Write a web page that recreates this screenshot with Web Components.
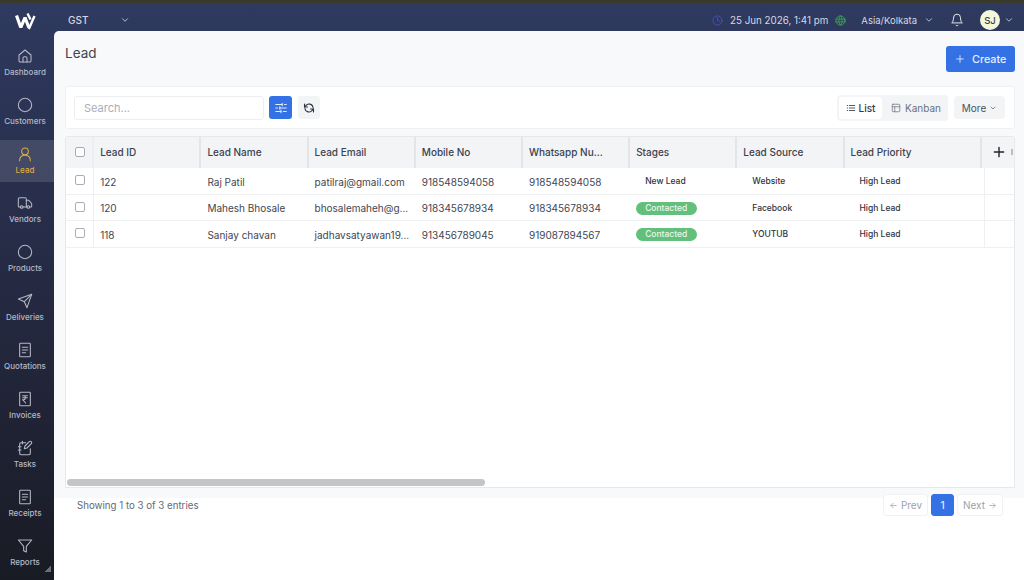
<!DOCTYPE html>
<html>
<head>
<meta charset="utf-8">
<title>Lead</title>
<style>
  html, body { margin: 0; height: 100%; }
  body { font-family: Inter, "Noto Sans", sans-serif; overflow: hidden; background: #fff; }
</style>
</head>
<body>
<app-shell>
  <side-nav slot="nav">
    <nav-item icon="home" label="Dashboard"></nav-item>
    <nav-item icon="circle" label="Customers"></nav-item>
    <nav-item icon="user" label="Lead" active></nav-item>
    <nav-item icon="truck" label="Vendors"></nav-item>
    <nav-item icon="circle" label="Products"></nav-item>
    <nav-item icon="send" label="Deliveries"></nav-item>
    <nav-item icon="file" label="Quotations"></nav-item>
    <nav-item icon="rupee" label="Invoices"></nav-item>
    <nav-item icon="notebook" label="Tasks"></nav-item>
    <nav-item icon="file" label="Receipts"></nav-item>
    <nav-item icon="funnel" label="Reports"></nav-item>
  </side-nav>
  <top-bar slot="top"></top-bar>
  <page-head title-text="Lead"></page-head>
  <lead-toolbar></lead-toolbar>
  <lead-table>
    <lead-row values="122|Raj Patil|patilraj@gmail.com|918548594058|918548594058" stage="New Lead" source="Website" priority="High Lead"></lead-row>
    <lead-row values="120|Mahesh Bhosale|bhosalemaheh@g...|918345678934|918345678934" stage="Contacted" source="Facebook" priority="High Lead"></lead-row>
    <lead-row values="118|Sanjay chavan|jadhavsatyawan19...|913456789045|919087894567" stage="Contacted" source="YOUTUB" priority="High Lead"></lead-row>
  </lead-table>
  <table-footer></table-footer>
</app-shell>

<script>
// stroke icons, all on a 24 box
const ICONS = {
  home: '<path d="M3 10.5 12 3l9 7.5V19a2 2 0 0 1-2 2H5a2 2 0 0 1-2-2z"/><path d="M9 21v-6a2 2 0 0 1 2-2h2a2 2 0 0 1 2 2v6"/>',
  circle: '<circle cx="12" cy="12" r="10"/>',
  user: '<circle cx="12" cy="8" r="5"/><path d="M4 22c0-5 3.5-8 8-8s8 3 8 8"/>',
  truck: '<path d="M14 18V6a2 2 0 0 0-2-2H4a2 2 0 0 0-2 2v11a1 1 0 0 0 1 1h2"/><path d="M15 18H9"/><path d="M19 18h2a1 1 0 0 0 1-1v-3.6a1 1 0 0 0-.2-.6l-3.5-4.4a1 1 0 0 0-.8-.4H14"/><circle cx="17" cy="18" r="2"/><circle cx="7" cy="18" r="2"/>',
  send: '<path d="M22 2 15 22l-4-9-9-4z"/><path d="M22 2 11 13"/>',
  file: '<rect x="4" y="2" width="16" height="20" rx="1"/><path d="M8 8h8M8 12h8M8 16h5"/>',
  rupee: '<rect x="4" y="2" width="16" height="20" rx="1"/><path d="M8.5 7h7M8.5 10h7M8.5 13l4.5 5M8.5 13h1.5c3.5 0 3.5-6 0-6"/>',
  notebook: '<path d="M13 4H6a2 2 0 0 0-2 2v14a2 2 0 0 0 2 2h12a2 2 0 0 0 2-2v-7"/><path d="M2 10h4M2 15h4M8 2v4"/><path d="M18.4 2.6a2 2 0 0 1 3 3L15 12l-4 1 1-4z"/>',
  funnel: '<path d="M22 3H2l8 9.5V19l4 2v-8.500z"/>',
  chevron: '<path d="m6 9 6 6 6-6"/>',
  clock: '<circle cx="12" cy="12" r="10"/><path d="M12 6v6l4 2"/>',
  globe: '<circle cx="12" cy="12" r="10"/><path d="M2 9h20M2 15h20"/><path d="M12 2c-5 5-5 15 0 20M12 2c5 5 5 15 0 20"/>',
  bell: '<path d="M6 8a6 6 0 0 1 12 0c0 7 3 9 3 9H3s3-2 3-9"/><path d="M10.300 21a1.900 1.900 0 0 0 3.400 0"/>',
  plus: '<path d="M12 4v16M4 12h16"/>',
  sliders: '<path d="M3 6h11M18 6h3M3 12h3M10 12h11M3 18h9M16 18h5"/><path d="M14 4v4M10 10v4M12 16v4"/>',
  refresh: '<path d="M20 11a8 8 0 0 0-14.500-3.500L3 10"/><path d="M3 4v6h6"/><path d="M4 13a8 8 0 0 0 14.500 3.500L21 14"/><path d="M21 20v-6h-6"/>',
  list: '<path d="M8 6h13M8 12h13M8 18h13M3 6h1M3 12h1M3 18h1"/>',
  kanban: '<rect x="3" y="3" width="18" height="18" rx="2"/><path d="M3 9h18M9 9v12"/>',
  arrowl: '<path d="M19 12H5M11 6l-6 6 6 6"/>',
  arrowr: '<path d="M5 12h14M13 6l6 6-6 6"/>'
};
const icon = (name, size, sw = 2) =>
  `<svg width="${size}" height="${size}" viewBox="0 0 24 24" fill="none" stroke="currentColor" stroke-width="${sw}" stroke-linecap="round" stroke-linejoin="round">${ICONS[name]}</svg>`;

class AppShell extends HTMLElement {
  constructor() {
    super();
    this.attachShadow({mode: 'open'});
    this.shadowRoot.innerHTML = `
      <style>
        :host { display: block; width: 1024px; height: 580px; overflow: hidden; background: #fff; }
        #strip { height: 3px; background: #3a3a2c; }
        #frame {
          height: 577px;
          display: grid;
          grid-template-columns: 54px 1fr;
          grid-template-rows: 28px 1fr;
          background: linear-gradient(180deg, #2f3a60 0%, #262b45 45%, #191b24 100%);
        }
        #nav { grid-row: 1 / 3; }
        main {
          min-width: 0;
          display: flex;
          flex-direction: column;
          padding: 15px 9px 0 11px;
          border-top-left-radius: 5px;
          background: linear-gradient(180deg, #f8f9fb 467px, #fff 467px);
        }
        slot[name=top] { display: block; }
      </style>
      <div id="strip"></div>
      <div id="frame">
        <div id="nav"><slot name="nav"></slot></div>
        <slot name="top"></slot>
        <main><slot></slot></main>
      </div>
    `;
  }
}
customElements.define('app-shell', AppShell);

class SideNav extends HTMLElement {
  constructor() {
    super();
    this.attachShadow({mode: 'open'});
    this.shadowRoot.innerHTML = `
      <style>
        :host { display: block; position: relative; height: 100%; }
        #logo { display: block; margin-left: 15px; padding-top: 9px; height: 30px; }
        #items { display: flex; flex-direction: column; gap: 7px; }
        #grip {
          position: absolute; right: 3px; bottom: 8px; width: 6px; height: 6px;
          background: linear-gradient(135deg, transparent 50%, #6b6e78 50%);
        }
      </style>
      <svg id="logo" width="21" height="30" viewBox="0 0 21 30" fill="none" stroke="#fff" stroke-linejoin="bevel">
        <path stroke-width="3.200" d="M1.500 3.500 5.800 15.500 10 5.500 13.800 15.500"/>
        <path stroke-width="2.400" d="M12.500 1.500 15.500 7.500"/>
        <path stroke-width="2.400" d="M13.800 17 19.500 4"/>
      </svg>
      <div id="items"><slot></slot></div>
      <div id="grip"></div>
    `;
  }
}
customElements.define('side-nav', SideNav);

class NavItem extends HTMLElement {
  constructor() {
    super();
    this.attachShadow({mode: 'open'});
  }
  connectedCallback() {
    const active = this.hasAttribute('active');
    this.shadowRoot.innerHTML = `
      <style>
        :host {
          display: flex; flex-direction: column; align-items: center;
          height: 42px; box-sizing: border-box; padding: 6px 4px 0 0;
          color: ${active ? '#dcab45' : '#b4b8c4'};
          background: ${active ? 'rgba(255,255,255,.12)' : 'transparent'};
        }
        svg { display: block; }
        span { font-size: 8px; line-height: 12px; margin-top: 2px; font-weight: 500; white-space: nowrap; }
      </style>
      ${icon(this.getAttribute('icon'), 16, 1.6)}
      <span>${this.getAttribute('label')}</span>
    `;
  }
}
customElements.define('nav-item', NavItem);

class TopBar extends HTMLElement {
  constructor() {
    super();
    this.attachShadow({mode: 'open'});
    this.shadowRoot.innerHTML = `
      <style>
        :host {
          display: flex; align-items: center; height: 28px; box-sizing: border-box;
          padding: 6px 10px 0 14px; color: #d5d8e2; font-size: 10px;
        }
        svg { display: block; flex: none; }
        #gst { font-weight: 500; font-size: 10px; width: 52px; }
        #right { margin-left: auto; display: flex; align-items: center; }
        #clock { color: #4a4fc4; margin-right: 7px; }
        #date { font-size: 9.800px; }
        #globe { color: #3f9b5c; margin: 0 15px 0 7px; }
        #zone { font-size: 9.500px; }
        #zc { margin: 0 16px 0 7px; }
        #bell { margin-right: 16px; color: #e6e8ee; }
        #av {
          width: 20px; height: 20px; border-radius: 50%; background: #f3f8dd; color: #3a3f4e;
          font-size: 9.500px; font-weight: 500; display: flex; align-items: center; justify-content: center;
          margin-right: 4px;
        }
      </style>
      <span id="gst">GST</span>${icon('chevron', 10)}
      <div id="right">
        <span id="clock">${icon('clock', 11)}</span>
        <span id="date">25 Jun 2026, 1:41 pm</span>
        <span id="globe">${icon('globe', 11)}</span>
        <span id="zone">Asia/Kolkata</span>
        <span id="zc">${icon('chevron', 10)}</span>
        <span id="bell">${icon('bell', 14, 1.7)}</span>
        <span id="av">SJ</span>
        ${icon('chevron', 10)}
      </div>
    `;
  }
}
customElements.define('top-bar', TopBar);

class PageHead extends HTMLElement {
  constructor() {
    super();
    this.attachShadow({mode: 'open'});
  }
  connectedCallback() {
    this.shadowRoot.innerHTML = `
      <style>
        :host { display: flex; justify-content: space-between; align-items: flex-start; height: 26px; margin-bottom: 14px; }
        h1 { margin: -3px 0 0; font-size: 13.500px; line-height: 20px; font-weight: 400; color: #3d4452; }
        button {
          display: flex; align-items: center; gap: 7px; width: 69px; height: 26px; box-sizing: border-box;
          padding: 0 0 0 9px; border: 0; border-radius: 3px; background: #3471e4; color: #e8efff;
          font: 500 10.800px Inter, sans-serif;
        }
      </style>
      <h1>${this.getAttribute('title-text')}</h1>
      <button>${icon('plus', 10)}Create</button>
    `;
  }
}
customElements.define('page-head', PageHead);

class LeadToolbar extends HTMLElement {
  constructor() {
    super();
    this.attachShadow({mode: 'open'});
    this.shadowRoot.innerHTML = `
      <style>
        :host {
          display: flex; align-items: center; height: 43px; box-sizing: border-box; margin-bottom: 7px;
          padding: 0 9px 0 8px; background: #fff; border: 1px solid #f0f1f4; border-radius: 3px;
        }
        svg { display: block; }
        #search {
          width: 190px; height: 24px; box-sizing: border-box; padding: 0 9px; border: 1px solid #eceef1; border-radius: 3px;
          font: 400 11px Inter, sans-serif; color: #333; outline: none; background: #fff;
        }
        #search::placeholder { color: #a9aeb9; }
        .sq {
          height: 23px; border-radius: 3px; display: flex; align-items: center; justify-content: center;
        }
        #filter { width: 23px; margin-left: 5px; background: #3471e4; color: #e4ecfd; }
        #reload { width: 22px; margin-left: 6px; background: #f3f4f6; color: #2e3340; }
        #seg {
          margin-left: auto; display: flex; align-items: center; padding: 2px; height: 26px; box-sizing: border-box;
          width: 111px; background: #f3f4f6; border-radius: 4px;
        }
        .tab { display: flex; align-items: center; gap: 3px; height: 22px; font-size: 10px; color: #6b7280; }
        #list { width: 43px; justify-content: center; background: #fff; border-radius: 3px; color: #333a47; font-weight: 500; }
        #kan { padding-left: 9px; gap: 4px; }
        #more {
          margin-left: 6px; width: 51px; height: 23px; display: flex; align-items: center; justify-content: center; gap: 3px;
          background: #f3f4f6; border-radius: 4px; font-size: 10px; color: #4b5260;
        }
      </style>
      <input id="search" placeholder="Search...">
      <div class="sq" id="filter">${icon('sliders', 14, 1.8)}</div>
      <div class="sq" id="reload">${icon('refresh', 12, 2.2)}</div>
      <div id="seg">
        <div class="tab" id="list">${icon('list', 10)}List</div>
        <div class="tab" id="kan">${icon('kanban', 10, 1.8)}Kanban</div>
      </div>
      <div id="more">More ${icon('chevron', 8)}</div>
    `;
  }
}
customElements.define('lead-toolbar', LeadToolbar);

const HEADS = ['Lead ID', 'Lead Name', 'Lead Email', 'Mobile No', 'Whatsapp Nu...', 'Stages', 'Lead Source', 'Lead Priority'];

class LeadTable extends HTMLElement {
  constructor() {
    super();
    this.attachShadow({mode: 'open'});
    this.shadowRoot.innerHTML = `
      <style>
        :host {
          display: block; position: relative; height: 352px; box-sizing: border-box; overflow: hidden;
          background: #fff; border: 1px solid #e6e8ec; border-radius: 3px 3px 0 0;
        }
        #head {
          display: grid; grid-template-columns: 28.200px repeat(7, 107.200px) 137.400px 1fr; height: 31px; background: #f3f4f6;
          font-size: 10px; font-weight: 500; color: #3b4250;
        }
        #head > div {
          display: flex; align-items: center; padding: 0 0 1px 6px; border-right: 2px solid #e3e5e9;
          box-sizing: border-box; white-space: nowrap;
        }
        #head > div:first-child { padding-left: 9px; border-right-color: #eceef1; }
        #head > div:last-child { border-right: 0; padding-left: 10px; color: #1f2430; }
        #head svg { display: block; }
        #nub { width: 2px; height: 6px; background: #b9bcc3; margin-left: 5px; }
        .box { width: 10px; height: 10px; box-sizing: border-box; border: 1px solid #a9adb5; border-radius: 2px; background: #fff; }
        #bar {
          position: absolute; left: 1px; bottom: 1px; width: 418px; height: 7px;
          border-radius: 4px; background: #c4c5c7;
        }
      </style>
      <div id="head">
        <div><span class="box"></span></div>
        ${HEADS.map((h) => `<div>${h}</div>`).join('')}
        <div>${icon('plus', 14, 2.4)}<span id="nub"></span></div>
      </div>
      <slot></slot>
      <div id="bar"></div>
    `;
  }
}
customElements.define('lead-table', LeadTable);

class LeadRow extends HTMLElement {
  constructor() {
    super();
    this.attachShadow({mode: 'open'});
  }
  connectedCallback() {
    const vals = this.getAttribute('values').split('|');
    const stage = this.getAttribute('stage');
    const on = stage === 'Contacted';
    this.shadowRoot.innerHTML = `
      <style>
        :host {
          display: grid; height: 26.500px; box-sizing: border-box;
          grid-template-columns: 28.200px repeat(7, 107.200px) 139.400px 1fr;
          border-bottom: 1px solid #eff0f2; font-size: 10px; color: #3f4653;
        }
        div { display: flex; align-items: center; padding: 2px 0 0 6px; white-space: nowrap; min-width: 0; }
        .check { padding: 0 0 0 9px; border-right: 1px solid #eceef1; }
        .box { width: 10px; height: 10px; box-sizing: border-box; border: 1px solid #a9adb5; border-radius: 2px; margin-top: -1px; }
        .chip { font-size: 8.500px; font-weight: 500; color: #2f3440; padding: 0 9px; height: 13px; line-height: 13px; border-radius: 7px; }
        .on { background: #62bf7c; color: #e9f7ed; width: 61px; box-sizing: border-box; }
        .end { border-left: 1px solid #eff0f2; }
      </style>
      <div class="check"><span class="box"></span></div>
      ${vals.map((v) => `<div>${v}</div>`).join('')}
      <div><span class="chip ${on ? 'on' : ''}">${stage}</span></div>
      <div><span class="chip">${this.getAttribute('source')}</span></div>
      <div><span class="chip">${this.getAttribute('priority')}</span></div>
      <div class="end"></div>
    `;
  }
}
customElements.define('lead-row', LeadRow);

class TableFooter extends HTMLElement {
  constructor() {
    super();
    this.attachShadow({mode: 'open'});
    this.shadowRoot.innerHTML = `
      <style>
        :host {
          display: flex; align-items: center; justify-content: space-between; margin-top: 6px; height: 22px;
          padding: 0 12px 0 12px; font-size: 9.700px; color: #626977;
        }
        #pages { display: flex; gap: 3px; align-items: center; }
        .pg {
          height: 22px; box-sizing: border-box; display: flex; align-items: center; justify-content: center; gap: 3px;
          border: 1px solid #f1f2f4; border-radius: 3px; font-size: 10px; color: #9ca1ab; background: #fff;
        }
        .pg svg { display: block; }
        .nav { width: 45px; }
        .nav:last-child { width: 46px; }
        #cur { width: 23px; background: #3471e4; border-color: #3471e4; color: #e6eefe; font-weight: 500; }
      </style>
      <span>Showing 1 to 3 of 3 entries</span>
      <div id="pages">
        <div class="pg nav">${icon('arrowl', 9)}Prev</div>
        <div class="pg" id="cur">1</div>
        <div class="pg nav">Next${icon('arrowr', 9)}</div>
      </div>
    `;
  }
}
customElements.define('table-footer', TableFooter);
</script>
</body>
</html>
